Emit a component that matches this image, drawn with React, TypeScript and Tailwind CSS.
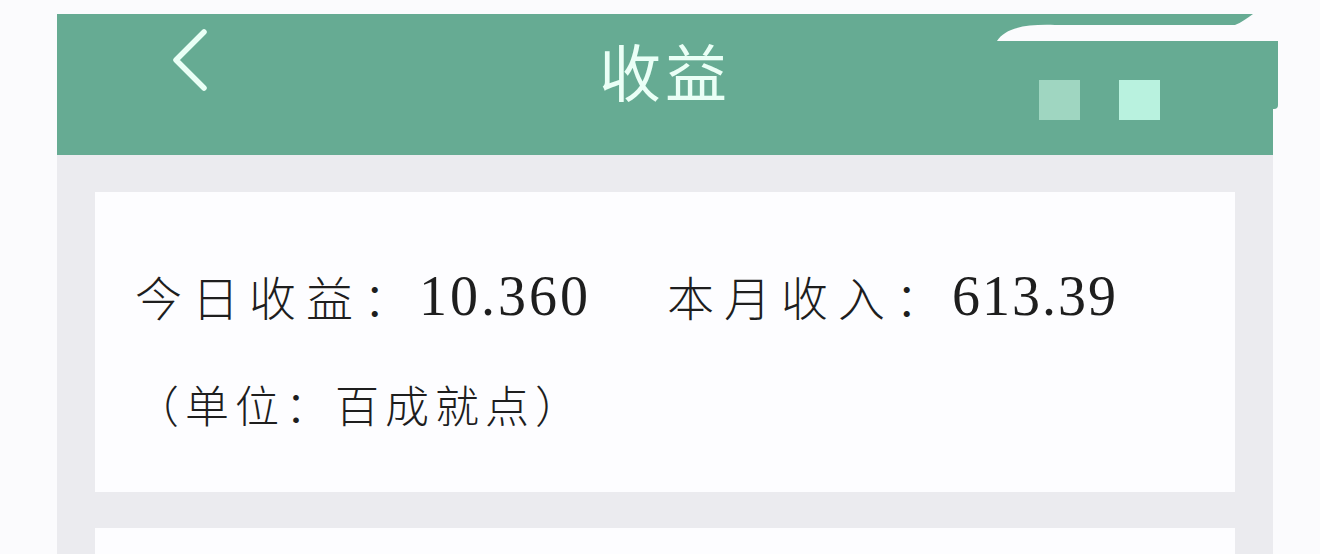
const cjk = "font-['Noto_Sans_CJK_SC',sans-serif]";
const serif = "font-['Liberation_Serif','Noto_Sans_CJK_SC',serif]";

function BackIcon() {
  return (
    <svg width="40" height="64" viewBox="0 0 40 64" fill="none">
      <path
        d="M33 4 L5 32 L33 60"
        stroke="#eafff6"
        strokeWidth="5.5"
        strokeLinecap="round"
        strokeLinejoin="round"
      />
    </svg>
  );
}

function Header() {
  return (
    <div className="relative h-[141px] bg-[#66ab93] grid grid-cols-[1fr_auto_1fr]">
      <div className="pl-[114px] pt-[14px]">
        <BackIcon />
      </div>
      <h1 className={`${cjk} pt-[25px] text-[62px] leading-none font-normal text-[#eafff6] tracking-[4px]`}>
        收益
      </h1>
      <div className="flex justify-end items-start gap-[39px] pr-[113px] pt-[66px]">
        <span className="w-[41px] h-[40px] bg-[#9fd6c1]" />
        <span className="w-[41px] h-[40px] bg-[#b9f2df]" />
      </div>
      {/* smeared white overlay at the top right corner */}
      <svg
        className="absolute top-0 left-[938px]"
        width="290"
        height="28"
        viewBox="0 0 290 28"
      >
        <path
          d="M2 27 C10 14 30 10 60 11 L240 11 C246 9 252 4 258 0 L290 0 L290 27 Z"
          fill="#fbfbfd"
        />
      </svg>
      <span className="absolute top-[27px] left-full w-[5px] h-[68px] bg-[#66ab93] rounded-br-[4px]" />
    </div>
  );
}

export default function App() {
  return (
    <div className="w-[1320px] h-[554px] overflow-hidden bg-[#fbfbfd]">
      <div className="ml-[57px] mt-[14px] w-[1216px] h-[540px] bg-[#ebebef]">
        <Header />
        <div className="px-[38px] pt-[37px]">
          <div className="h-[300px] bg-[#fdfdff] pl-[40px] pt-[72px] text-[#1e1e1e]">
            <div className="flex items-center h-[64px]">
              <span className={`${cjk} text-[47px] font-light tracking-[10px]`}>今日收益：</span>
              <span className={`${serif} text-[56px] tracking-[3px] ml-[-1px]`}>10.360</span>
              <span className={`${cjk} text-[47px] font-light tracking-[10px] ml-[76px]`}>本月收入：</span>
              <span className={`${serif} text-[56px] tracking-[2px] ml-[0px]`}>613.39</span>
            </div>
            <div className={`${cjk} mt-[54px] text-[44px] font-light tracking-[6px] leading-none`}>
              （单位：百成就点）
            </div>
          </div>
          <div className="mt-[36px] h-[100px] bg-[#fdfdff]" />
        </div>
      </div>
    </div>
  );
}
